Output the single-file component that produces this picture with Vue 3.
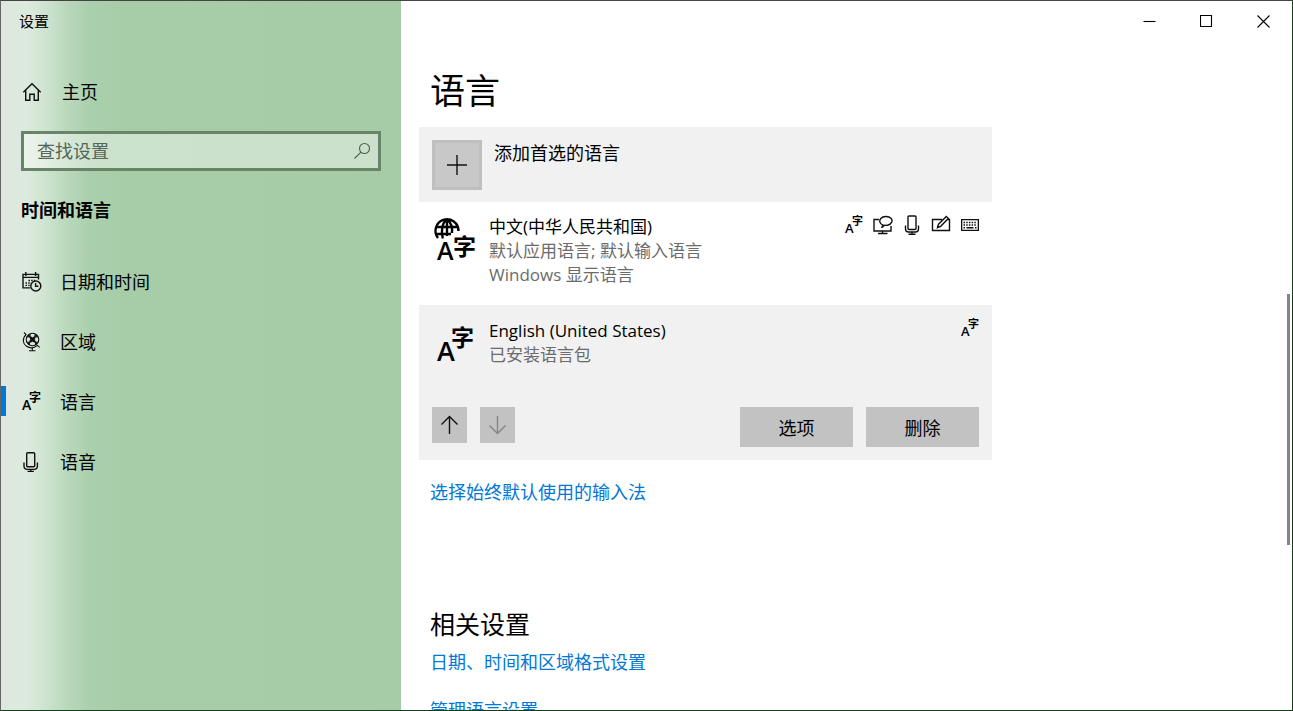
<script setup>
import { ref } from 'vue'

const query = ref('')
const current = ref('language')
const nav = [
  { id: 'date', label: '日期和时间' },
  { id: 'region', label: '区域' },
  { id: 'language', label: '语言' },
  { id: 'speech', label: '语音' },
]
</script>

<template>
  <div class="window">
    <aside class="sidebar">
      <div class="app-title">设置</div>
      <a class="home" href="#home">
        <svg class="icon" width="20" height="20" viewBox="0 0 20 20" aria-hidden="true">
          <path d="M1.3 10.3 10 1.8l8.7 8.5M3.7 8.2v10h4.1v-6h4.4v6h4.1v-10" />
        </svg>
        <span>主页</span>
      </a>
      <label class="search">
        <input v-model="query" type="text" placeholder="查找设置" aria-label="查找设置" />
        <svg class="icon glass" width="18" height="18" viewBox="0 0 18 18" aria-hidden="true">
          <circle cx="11.5" cy="6.5" r="5" />
          <path d="M8 10.1 1.500 16.5" />
        </svg>
      </label>
      <h2 class="group">时间和语言</h2>
      <nav class="nav">
        <a
          v-for="item in nav"
          :key="item.id"
          :href="'#' + item.id"
          :class="['nav-item', { active: item.id === current }]"
          @click.prevent="current = item.id"
        >
          <svg v-if="item.id === 'date'" class="icon" width="20" height="20" viewBox="0 0 20 20" aria-hidden="true">
            <path d="M8.5 15.9H1V2.4h15.5v5.2M1 5.4h15.5M3.8 0v4M13.6 0v4" />
            <path class="dots" d="M6.5 8.5H13M3.5 11H9M3.5 13.4H8" />
            <circle cx="13.8" cy="14" r="5" />
            <path d="M13.6 11v3.3h2.8" />
          </svg>
          <svg v-else-if="item.id === 'region'" class="icon globe" width="20" height="20" viewBox="0 0 20 20" aria-hidden="true">
            <circle cx="10.5" cy="7.5" r="6.3" />
            <path d="M6 3 15 12M15 3 6 12M5 5C9 3.500 14.500 8 13.500 13M8 2C7 7 11 11.500 16.300 10M16 5C12 3.500 6.500 8 7.500 13M13 2C14 7 10 11.500 4.700 10" />
            <path d="M2 .5 4 2.6C-.2 6.7 1 12.2 4.5 14.3c3.6 2.2 8 1.500 10.800-.9l2.500 2M10.3 15.500v3M7 18.700h6.500" />
          </svg>
          <svg v-else-if="item.id === 'language'" class="glyphs" width="20" height="20" viewBox="0 0 20 20" aria-hidden="true">
            <text class="latin" x="0" y="18" font-size="14">A</text>
            <text class="han" x="7" y="10" font-size="12">字</text>
          </svg>
          <svg v-else class="icon" width="20" height="20" viewBox="0 0 20 20" aria-hidden="true">
            <rect x="4.7" y=".7" width="8" height="14" rx="1" />
            <path d="M2 10.5V14q0 3.4 3.4 3.4H12q3.4 0 3.4-3.4v-3.5M8.7 17.4v2M5.5 19.4h6.4" />
          </svg>
          <span>{{ item.label }}</span>
        </a>
      </nav>
    </aside>

    <main class="main">
      <div class="caption">
        <button type="button" aria-label="最小化">
          <svg width="13" height="13" viewBox="0 0 13 13"><path d="M.5 6.5h12" /></svg>
        </button>
        <button type="button" aria-label="最大化">
          <svg width="13" height="13" viewBox="0 0 13 13"><path d="M.5.5h11v11H.5z" /></svg>
        </button>
        <button type="button" aria-label="关闭">
          <svg width="13" height="13" viewBox="0 0 13 13"><path d="m.5.5 12 12M12.500.5l-12 12" /></svg>
        </button>
      </div>

      <div class="content">
        <h1>语言</h1>

        <div class="add">
          <button id="add-language" type="button" class="plus" aria-labelledby="add-label">
            <svg class="icon" width="20" height="20" viewBox="0 0 20 20" aria-hidden="true"><path d="M10 0v20M0 10h20" /></svg>
          </button>
          <label id="add-label" for="add-language">添加首选的语言</label>
        </div>

        <section class="lang">
          <div class="lang-row">
            <svg class="glyphs big" width="44" height="44" viewBox="0 0 44 44" aria-hidden="true">
              <path d="M6 21A11.500 11.500 0 1 1 26.500 14M15 2.300V19M4 10h22M4 17h15M10.800 21.500C8.800 14 10 6 15 2.300 19.500 6 20.500 11 20 16" />
              <text class="latin" x="5" y="43" font-size="25">A</text>
              <text class="han" x="21" y="38" font-size="23">字</text>
            </svg>
            <div class="lang-text">
              <h3>中文(中华人民共和国)</h3>
              <p>默认应用语言; 默认输入语言</p>
              <p>Windows 显示语言</p>
            </div>
            <div class="features">
              <svg class="glyphs" width="18" height="20" viewBox="0 0 18 20" aria-hidden="true">
                <text class="latin" x="0" y="18" font-size="13">A</text>
                <text class="han" x="7" y="10" font-size="11">字</text>
              </svg>
              <svg class="icon" width="20" height="20" viewBox="0 0 20 20" aria-hidden="true">
                <path d="M6 4.500H1v11.500h17v-5M9.500 16v2.500M5 18.500h9.500" />
                <path d="M10 10.200C6.500 9 6 5.500 7.800 3.500 10 1 15.500.8 18 3.200c2.300 2.500.5 6.300-3.500 7-1.200.2-2 .2-2.800.1L8.500 12.800z" />
              </svg>
              <svg class="icon" width="18" height="20" viewBox="0 0 18 20" aria-hidden="true">
                <rect x="5" y="1" width="8" height="13.500" rx="1" />
                <path d="M2.500 10.500V14q0 3 3 3h7q3 0 3-3v-3.500M9 17v2M5.500 19.200h7" />
              </svg>
              <svg class="icon" width="20" height="20" viewBox="0 0 20 20" aria-hidden="true">
                <path d="M11 4.500H1.500v11h17v-11H17M6.500 12.500l1-3.300L15.300 1.500l2 2-7.600 7.800z" />
              </svg>
              <svg class="icon" width="18" height="20" viewBox="0 0 18 20" aria-hidden="true">
                <path d="M.6 4.600h16.800v10.800H.6z" />
                <path class="dots" d="M2.500 7.500h13.500M2.500 10h13.500M2.500 12.700h2" />
                <path d="M5.500 12.700h7M14 12.700h1.500" />
              </svg>
            </div>
          </div>
        </section>

        <section class="lang selected">
          <div class="lang-row">
            <svg class="glyphs big" width="44" height="44" viewBox="0 0 44 44" aria-hidden="true">
              <text class="latin" x="5" y="40" font-size="27">A</text>
              <text class="han" x="19" y="25" font-size="23">字</text>
            </svg>
            <div class="lang-text">
              <h3>English (United States)</h3>
              <p>已安装语言包</p>
            </div>
            <div class="features">
              <svg class="glyphs" width="18" height="20" viewBox="0 0 18 20" aria-hidden="true">
                <text class="latin" x="0" y="17" font-size="13">A</text>
                <text class="han" x="7" y="9" font-size="11">字</text>
              </svg>
            </div>
          </div>
          <div class="actions">
            <button type="button" class="arrow" aria-label="上移">
              <svg class="icon" width="19" height="20" viewBox="0 0 19 20"><path d="M9.500 19V1.500M1.500 9.500l8-8 8 8" /></svg>
            </button>
            <button type="button" class="arrow" aria-label="下移" disabled>
              <svg class="icon" width="19" height="20" viewBox="0 0 19 20"><path d="M9.500 1v17.500M1.500 10.500l8 8 8-8" /></svg>
            </button>
            <span class="spacer"></span>
            <button type="button" class="command">选项</button>
            <button type="button" class="command">删除</button>
          </div>
        </section>

        <a class="link" href="#input">选择始终默认使用的输入法</a>

        <h2 class="related">相关设置</h2>
        <a class="link" href="#formats">日期、时间和区域格式设置</a>
        <a class="link" href="#admin">管理语言设置</a>
      </div>
      <div class="scroll-thumb"></div>
    </main>
  </div>
</template>

<style>
body {
  margin: 0;
  overflow: hidden;
}
</style>

<style scoped>
.window {
  box-sizing: border-box;
  display: flex;
  height: 100vh;
  overflow: hidden;
  border: 1px solid #12401c;
  border-top-color: #444;
  border-left-color: #666;
  background: #fff;
  color: #000;
  font-family: "Open Sans", "Noto Sans CJK SC", sans-serif;
  font-size: 18px;
  line-height: 24px;
}
h1, h2, h3, p {
  margin: 0;
  font-weight: 400;
}
a {
  color: inherit;
  text-decoration: none;
}
button {
  padding: 0;
  border: 0;
  background: none;
  color: inherit;
  font: inherit;
}
.icon {
  flex: none;
  fill: none;
  stroke: #111;
  stroke-width: 1.4;
}
.dots {
  stroke-dasharray: 1.5 1.2;
}
.glyphs {
  flex: none;
  overflow: visible;
}
.glyphs path {
  fill: none;
  stroke: #000;
  stroke-width: 2.4;
}
.latin {
  font-family: "Open Sans", sans-serif;
  font-weight: 600;
}
.han {
  font-family: "Noto Sans CJK SC", sans-serif;
  font-weight: 700;
}
.globe {
  stroke-width: 1.1;
}

.sidebar {
  flex: none;
  box-sizing: border-box;
  width: 400px;
  background: linear-gradient(90deg, #dfe7e0 0, #dceadd 26px, #cfe4d1 44px, #bad8bc 66px, #aacfac 90px, #a6cda8 120px, #a5cba7 100%);
}
.app-title {
  padding: 8px 18px;
  font-size: 15px;
}
.home {
  display: flex;
  align-items: center;
  gap: 20px;
  height: 60px;
  margin-top: 21px;
  padding-left: 21px;
}
.search {
  display: flex;
  align-items: center;
  box-sizing: border-box;
  height: 40px;
  margin: 9px 20px 0;
  padding: 0 7px 0 13px;
  border: 3px solid #698569;
  background: rgba(255, 255, 255, 0.42);
}
.search input {
  flex: 1;
  min-width: 0;
  padding: 0;
  border: 0;
  outline: 0;
  background: none;
  color: #222;
  font: inherit;
}
.search input::placeholder {
  color: #556657;
  opacity: 1;
}
.glass {
  stroke: #4f5f50;
  stroke-width: 1.1;
}
.group {
  padding: 27px 20px 30px;
  font-size: 18px;
  font-weight: 700;
}
.nav-item {
  position: relative;
  display: flex;
  align-items: center;
  gap: 18px;
  height: 60px;
  padding-left: 21px;
}
.nav-item.active::before {
  content: "";
  position: absolute;
  left: 0;
  top: 14px;
  width: 5px;
  height: 30px;
  background: #0078d7;
}

.main {
  position: relative;
  flex: 1;
  min-width: 0;
}
.caption {
  display: flex;
  justify-content: flex-end;
  height: 40px;
}
.caption button {
  display: grid;
  place-items: center;
  width: 57px;
}
.caption svg {
  fill: none;
  stroke: #000;
  stroke-width: 1.1;
}
.content {
  display: flex;
  flex-direction: column;
  align-items: flex-start;
  max-width: 573px;
  padding: 26px 18px 0;
}
h1 {
  padding: 0 11px;
  font-size: 35px;
  line-height: 48px;
}
.add {
  display: flex;
  gap: 12px;
  align-self: stretch;
  margin-top: 12px;
  padding: 13px 13px 12px;
  background: #f1f1f1;
}
.add label {
  padding-top: 1px;
}
.plus {
  display: grid;
  place-items: center;
  width: 50px;
  height: 50px;
  border: 3px solid #bfbfbf;
  background: #c8c8c8;
}
.lang {
  box-sizing: border-box;
  align-self: stretch;
  padding: 13px;
}
.lang.selected {
  margin-top: 1px;
  padding-top: 14px;
  background: #f1f1f1;
}
.lang-row {
  display: flex;
  align-items: flex-start;
  min-height: 76px;
}
.big {
  margin-top: 2px;
}
.lang-text {
  flex: 1;
  margin-left: 13px;
  font-size: 17px;
}
h3 {
  font-size: 17px;
}
p {
  color: #6b6b6b;
}
.features {
  display: flex;
  gap: 10px;
}
.actions {
  display: flex;
  align-items: flex-start;
  gap: 13px;
  margin-top: 12px;
}
.arrow {
  display: grid;
  place-items: center;
  width: 35px;
  height: 36px;
  background: #c2c2c2;
}
.arrow:disabled .icon {
  stroke: #858585;
}
.spacer {
  flex: 1;
}
.command {
  width: 113px;
  height: 40px;
  padding-top: 2px;
  background: #c2c2c2;
}
.link {
  margin: 20px 11px 0;
  color: #0078d7;
}
.related {
  margin-top: 102px;
  padding: 0 11px;
  font-size: 25px;
  line-height: 36px;
}
.related + .link {
  margin-top: 8px;
}
.link + .link {
  margin-top: 24px;
}
.scroll-thumb {
  position: absolute;
  right: 2px;
  top: 41.3%;
  width: 3px;
  height: 251px;
  background: #858585;
}
</style>
